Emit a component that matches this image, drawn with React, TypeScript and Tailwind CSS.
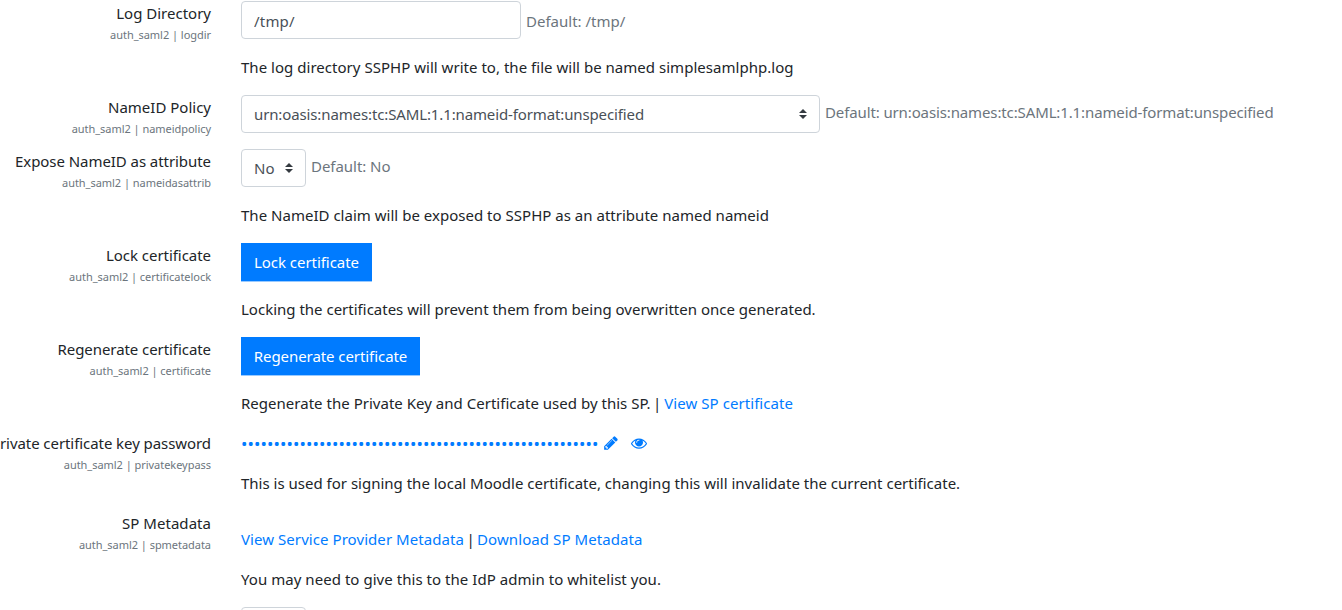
import React from "react";
import clsx from "clsx";

interface SettingProps {
  label: string;
  name: string;
  tracking?: string;
  className?: string;
  children: React.ReactNode;
}

const Setting: React.FC<SettingProps> = ({ label, name, tracking, className, children }) => (
  <div className="flex mb-4">
    <div className="w-[226px] -mb-2 shrink-0 pr-[15px] flex flex-col items-end whitespace-nowrap">
      <label className={clsx("leading-6", tracking)}>{label}</label>
      <span className="text-[11px] leading-5 tracking-[-0.04px] text-[#6c757d]">
        auth_saml2 | {name}
      </span>
    </div>
    <div className={clsx("flex-1 px-[15px]", className)}>{children}</div>
  </div>
);

const Description: React.FC<{ className?: string; children: React.ReactNode }> = ({ className, children }) => (
  <p className={clsx("mt-4 whitespace-nowrap leading-6", className)}>{children}</p>
);

const SelectArrows = () => (
  <svg viewBox="0 0 4 5" className="w-2 h-2.5 shrink-0" fill="#343a40">
    <path d="M2 0L0 2h4zm0 5L0 3h4z" />
  </svg>
);

const Select: React.FC<{ value?: string; className?: string }> = ({ value, className }) => (
  <button
    className={clsx(
      "flex h-[38px] shrink-0 items-center justify-between rounded border border-[#ced4da] bg-white px-3 text-[#495057] whitespace-nowrap",
      className
    )}
  >
    <span>{value}</span>
    <SelectArrows />
  </button>
);

const Button: React.FC<{ className?: string; children: React.ReactNode }> = ({ className, children }) => (
  <button
    className={clsx(
      "block h-[38px] bg-[#007bff] text-center text-white whitespace-nowrap shadow-[0_1px_0_#99caff]",
      className
    )}
  >
    {children}
  </button>
);

const Link: React.FC<{ className?: string; children: React.ReactNode }> = ({ className, children }) => (
  <a href="#" className={clsx("text-[#007bff]", className)}>
    {children}
  </a>
);

const PencilIcon = () => (
  <svg viewBox="0 0 1792 1792" className="w-4 h-4" fill="currentColor">
    <path d="M491 1536l91-91-235-235-91 91v107h128v128h107zm523-928q0-22-22-22-10 0-17 7l-542 542q-7 7-7 17 0 22 22 22 10 0 17-7l542-542q7-7 7-17zm-54-192l416 416-832 832h-416v-416zm683 96q0 53-37 90l-166 166-416-416 166-165q36-38 90-38 53 0 91 38l235 234q37 39 37 91z" />
  </svg>
);

const EyeIcon = () => (
  <svg viewBox="0 0 1792 1792" className="w-4 h-4" fill="currentColor">
    <path d="M1664 960q-152-236-381-353 61 104 61 225 0 185-131.5 316.5t-316.5 131.5-316.5-131.5-131.5-316.5q0-121 61-225-229 117-381 353 133 205 333.5 326.5t434.5 121.5 434.5-121.5 333.5-326.5zm-720-384q0-20-14-34t-34-14q-125 0-214.5 89.5t-89.5 214.5q0 20 14 34t34 14 34-14 14-34q0-86 61-147t147-61q20 0 34-14t14-34zm848 384q0 34-20 69-140 230-376.5 368.5t-499.5 138.5-499.5-139-376.5-368q-20-35-20-69t20-69q140-229 376.5-368t499.5-139 499.5 139 376.5 368q20 35 20 69z" />
  </svg>
);

const nameIdFormat = "urn:oasis:names:tc:SAML:1.1:nameid-format:unspecified";

export default function App() {
  return (
    <div className="h-[610px] overflow-hidden bg-white pt-px font-['Noto_Sans',sans-serif] text-[15px] text-[#212529]">
      <Setting label="Log Directory" name="logdir">
        <div className="flex items-center">
          <input
            type="text"
            defaultValue="/tmp/"
            className="h-[38px] w-[280px] rounded border border-[#ced4da] px-3 pt-0.5 tracking-[0.2px] text-[#495057]"
          />
          <span className="ml-[5px] pt-[3px] text-[#6c757d]">Default: /tmp/</span>
        </div>
        <Description className="tracking-[0.026px]">
          The log directory SSPHP will write to, the file will be named simplesamlphp.log
        </Description>
      </Setting>

      <Setting label="NameID Policy" name="nameidpolicy">
        <div className="flex items-center">
          <Select value={nameIdFormat} className="w-[579px] tracking-[-0.125px]" />
          <span className="ml-[5px] pb-[3px] tracking-[-0.122px] text-[#6c757d] whitespace-nowrap">
            Default: {nameIdFormat}
          </span>
        </div>
      </Setting>

      <Setting label="Expose NameID as attribute" name="nameidasattrib" tracking="tracking-[-0.06px]">
        <div className="flex items-center">
          <Select value="No" className="w-[65px] tracking-[0.2px]" />
          <span className="ml-[5px] pb-[3px] tracking-[-0.04px] text-[#6c757d]">Default: No</span>
        </div>
        <Description className="tracking-[0.017px]">
          The NameID claim will be exposed to SSPHP as an attribute named nameid
        </Description>
      </Setting>

      <Setting label="Lock certificate" name="certificatelock" tracking="tracking-[-0.044px]">
        <Button className="w-[131px] tracking-[-0.044px]">Lock certificate</Button>
        <Description>Locking the certificates will prevent them from being overwritten once generated.</Description>
      </Setting>

      <Setting label="Regenerate certificate" name="certificate" tracking="tracking-[-0.066px]">
        <Button className="w-[179px] tracking-[-0.066px]">Regenerate certificate</Button>
        <Description className="tracking-[0.02px]">
          Regenerate the Private Key and Certificate used by this SP. <span className="-ml-[1.5px] -mr-px">|</span>{" "}
          <Link className="tracking-[0.06px]">View SP certificate</Link>
        </Description>
      </Setting>

      <Setting label="Private certificate key password" name="privatekeypass" tracking="tracking-[-0.069px]">
        <div className="flex h-6 items-center text-[#007bff]">
          <span className="w-[362px] shrink-0 pt-0.5 text-[17px] leading-6 tracking-[0.108px]">{"•".repeat(55)}</span>
          <PencilIcon />
          <span className="ml-3">
            <EyeIcon />
          </span>
        </div>
        <Description>
          This is used for signing the local Moodle certificate, changing this will invalidate the current certificate.
        </Description>
      </Setting>

      <Setting label="SP Metadata" name="spmetadata" tracking="tracking-[0.039px]" className="pt-4">
        <p className="leading-6">
          <Link className="tracking-[0.065px]">View Service Provider Metadata</Link>{" "}
          <span className="-mx-[1.5px]">|</span>{" "}
          <Link className="tracking-[0.083px]">Download SP Metadata</Link>
        </p>
        <Description className="tracking-[0.045px]">
          You may need to give this to the IdP admin to whitelist you.
        </Description>
      </Setting>

      <div className="pl-[241px]">
        <Select className="w-[65px]" />
      </div>
    </div>
  );
}
